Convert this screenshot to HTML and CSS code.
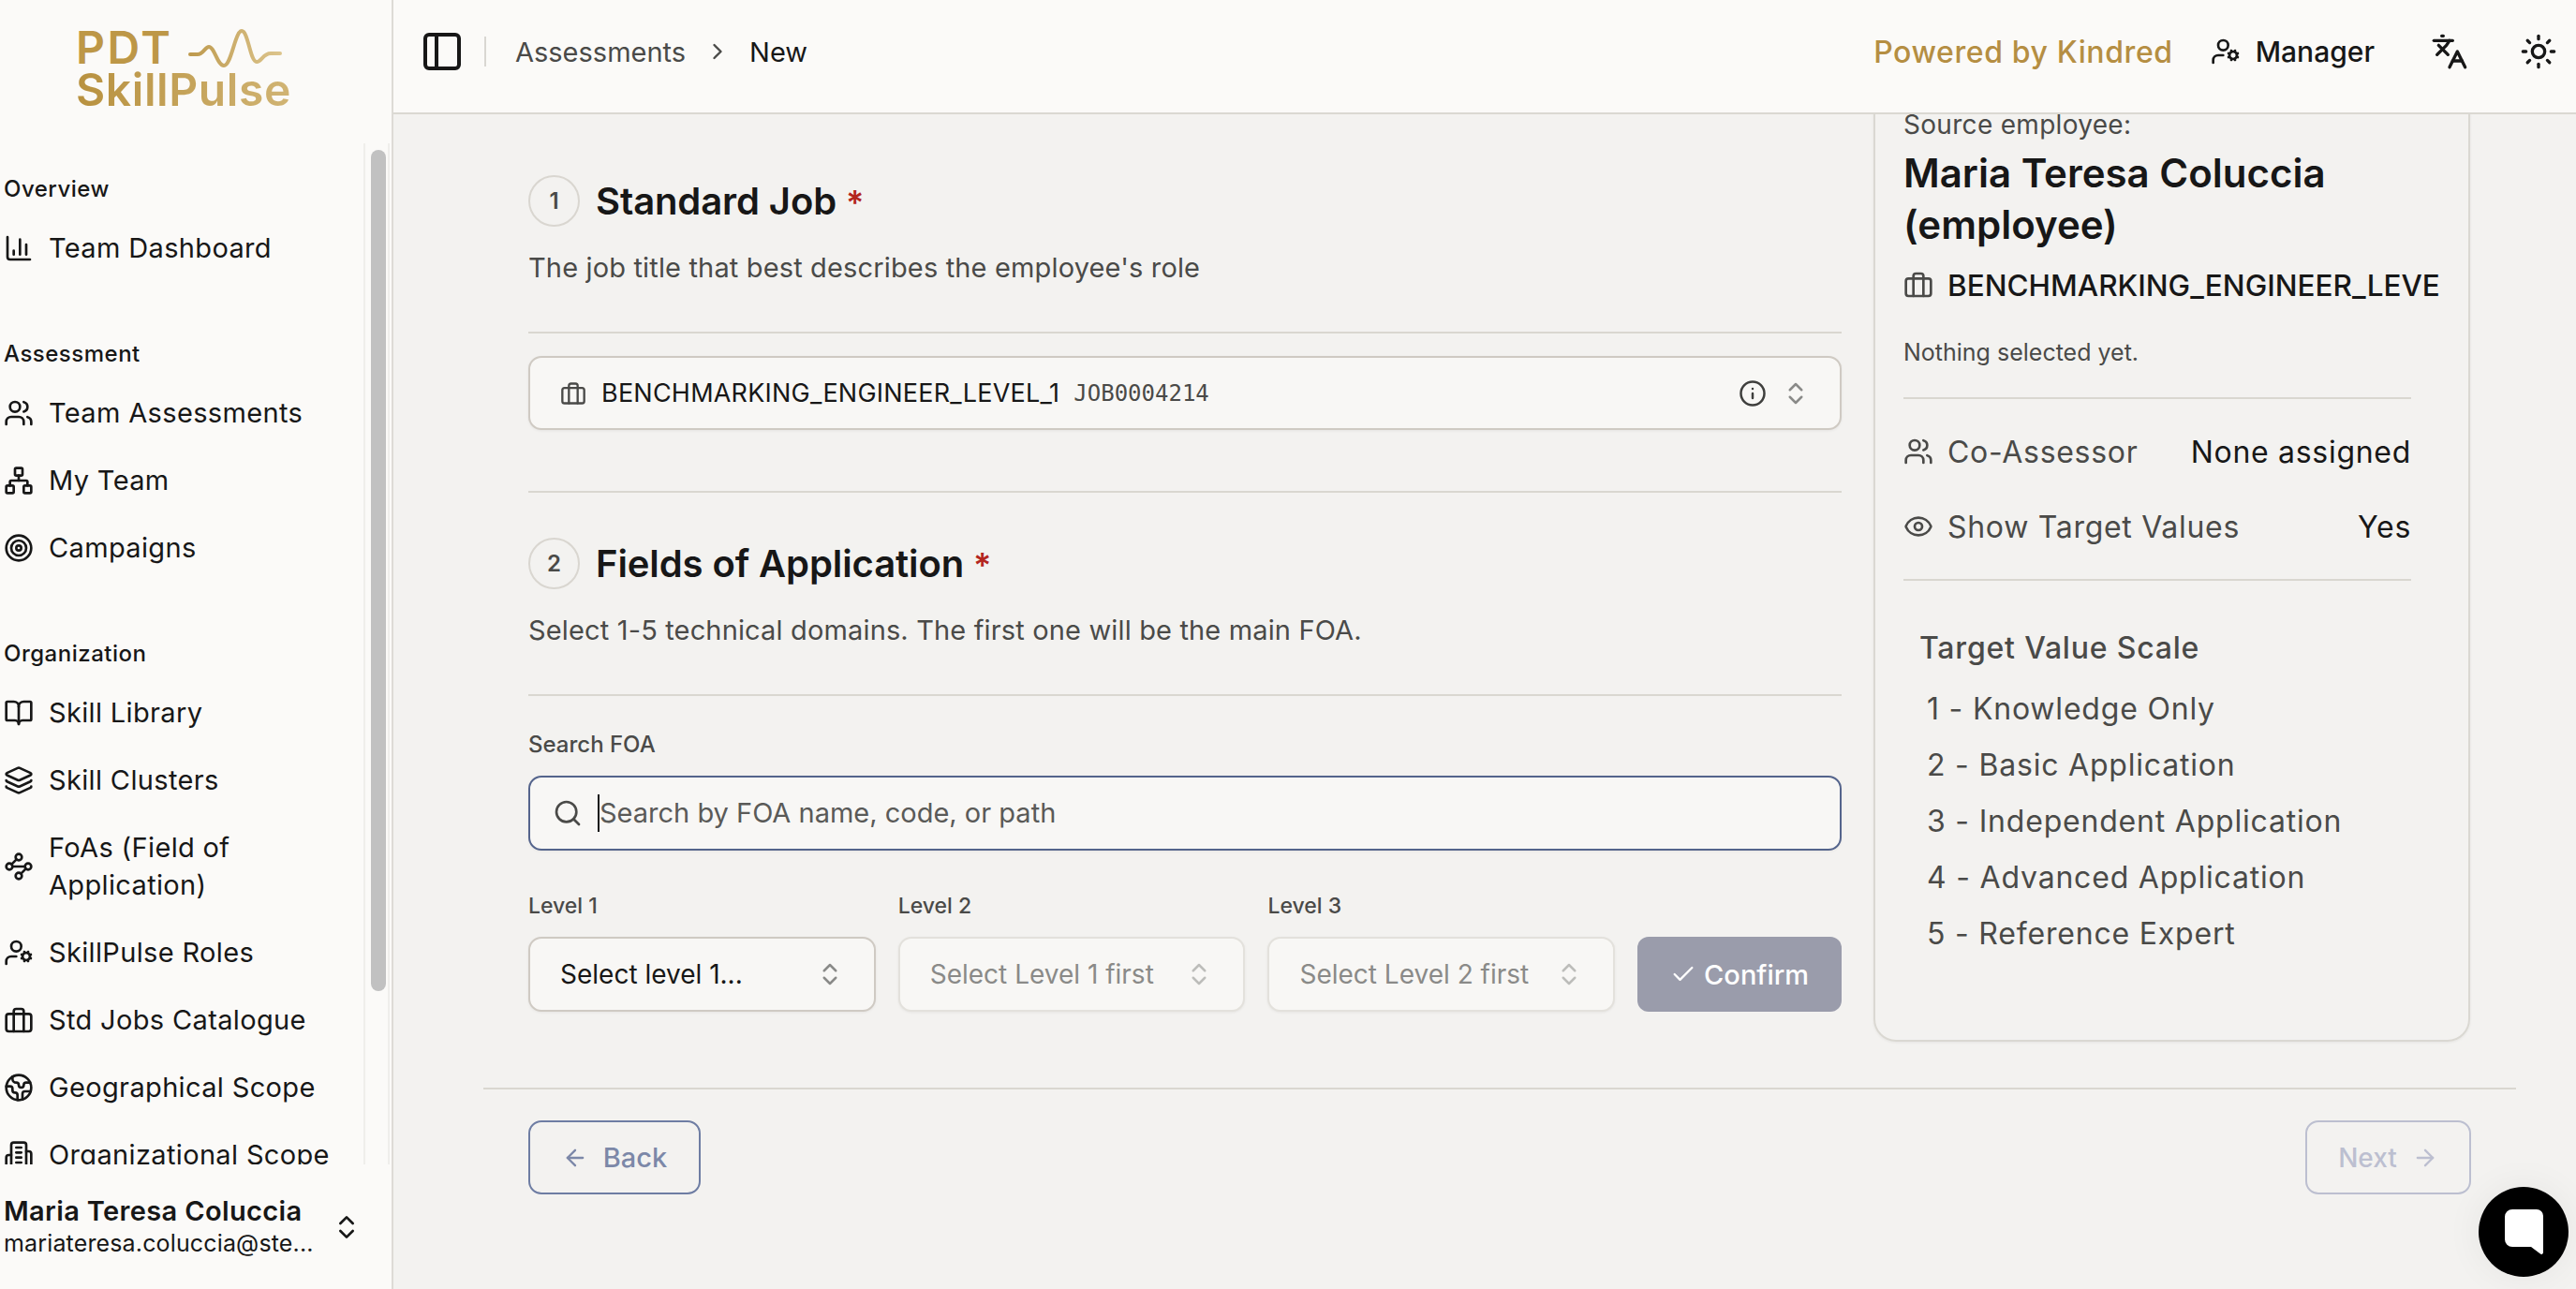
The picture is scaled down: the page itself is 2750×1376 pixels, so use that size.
FILE: index.html
```html
<!DOCTYPE html>
<html lang="en">
<head>
  <meta charset="UTF-8">
  <title>New Assessment - PDT SkillPulse</title>
  <link rel="stylesheet" href="styles.css">
</head>
<body>

  <!-- icon sprite -->
  <svg class="sprite" xmlns="http://www.w3.org/2000/svg">
    <symbol id="i-chart" viewBox="0 0 24 24"><path d="M3 3v16a2 2 0 0 0 2 2h16"/><path d="M18 17V9"/><path d="M13 17V5"/><path d="M8 17v-3"/></symbol>
    <symbol id="i-users" viewBox="0 0 24 24"><path d="M16 21v-2a4 4 0 0 0-4-4H6a4 4 0 0 0-4 4v2"/><circle cx="9" cy="7" r="4"/><path d="M22 21v-2a4 4 0 0 0-3-3.87"/><path d="M16 3.13a4 4 0 0 1 0 7.75"/></symbol>
    <symbol id="i-network" viewBox="0 0 24 24"><rect x="16" y="16" width="6" height="6" rx="1"/><rect x="2" y="16" width="6" height="6" rx="1"/><rect x="9" y="2" width="6" height="6" rx="1"/><path d="M5 16v-3a1 1 0 0 1 1-1h12a1 1 0 0 1 1 1v3"/><path d="M12 12V8"/></symbol>
    <symbol id="i-target" viewBox="0 0 24 24"><circle cx="12" cy="12" r="10"/><circle cx="12" cy="12" r="6"/><circle cx="12" cy="12" r="2"/></symbol>
    <symbol id="i-book" viewBox="0 0 24 24"><path d="M12 7v14"/><path d="M3 18a1 1 0 0 1-1-1V4a1 1 0 0 1 1-1h5a4 4 0 0 1 4 4 4 4 0 0 1 4-4h5a1 1 0 0 1 1 1v13a1 1 0 0 1-1 1h-6a3 3 0 0 0-3 3 3 3 0 0 0-3-3z"/></symbol>
    <symbol id="i-layers" viewBox="0 0 24 24"><path d="M12.83 2.18a2 2 0 0 0-1.66 0L2.6 6.08a1 1 0 0 0 0 1.83l8.58 3.91a2 2 0 0 0 1.66 0l8.58-3.9a1 1 0 0 0 0-1.83z"/><path d="M2 12a1 1 0 0 0 .58.91l8.6 3.91a2 2 0 0 0 1.65 0l8.58-3.9A1 1 0 0 0 22 12"/><path d="M2 17a1 1 0 0 0 .58.91l8.6 3.91a2 2 0 0 0 1.65 0l8.58-3.9A1 1 0 0 0 22 17"/></symbol>
    <symbol id="i-waypoints" viewBox="0 0 24 24"><circle cx="12" cy="4.5" r="2.5"/><path d="m10.2 6.3-3.9 3.9"/><circle cx="4.5" cy="12" r="2.5"/><path d="M7 12h10"/><circle cx="19.5" cy="12" r="2.5"/><path d="m13.8 17.7 3.9-3.9"/><circle cx="12" cy="19.5" r="2.5"/></symbol>
    <symbol id="i-usercog" viewBox="0 0 24 24"><path d="M10 15H6a4 4 0 0 0-4 4v2"/><path d="m14.305 16.53.923-.382"/><path d="m15.228 13.852-.923-.383"/><path d="m16.852 12.228-.383-.924"/><path d="m16.852 17.772-.383.924"/><path d="m19.148 12.228.383-.924"/><path d="m19.53 18.696-.382-.924"/><path d="m20.772 13.852.924-.383"/><path d="m20.772 16.148.924.383"/><circle cx="18" cy="15" r="3"/><circle cx="10" cy="7" r="4"/></symbol>
    <symbol id="i-briefcase" viewBox="0 0 24 24"><rect x="2" y="7" width="20" height="14" rx="2"/><path d="M16 21V5a2 2 0 0 0-2-2h-4a2 2 0 0 0-2 2v16"/></symbol>
    <symbol id="i-earth" viewBox="0 0 24 24"><path d="M21.54 15H17a2 2 0 0 0-2 2v4.54"/><path d="M7 3.34V5a3 3 0 0 0 3 3a2 2 0 0 1 2 2c0 1.1.9 2 2 2a2 2 0 0 0 2-2c0-1.1.9-2 2-2h3.17"/><path d="M11 21.95V18a2 2 0 0 0-2-2a2 2 0 0 1-2-2v-1a2 2 0 0 0-2-2H2.05"/><circle cx="12" cy="12" r="10"/></symbol>
    <symbol id="i-building" viewBox="0 0 24 24"><path d="M6 22V4a2 2 0 0 1 2-2h8a2 2 0 0 1 2 2v18Z"/><path d="M6 12H4a2 2 0 0 0-2 2v6a2 2 0 0 0 2 2h2"/><path d="M18 9h2a2 2 0 0 1 2 2v9a2 2 0 0 1-2 2h-2"/><path d="M10 6h4"/><path d="M10 10h4"/><path d="M10 14h4"/><path d="M10 18h4"/></symbol>
    <symbol id="i-updown" viewBox="0 0 24 24"><path d="m7 15 5 5 5-5"/><path d="m7 9 5-5 5 5"/></symbol>
    <symbol id="i-panel" viewBox="0 0 24 24"><rect x="3" y="3" width="18" height="18" rx="2"/><path d="M9 3v18"/></symbol>
    <symbol id="i-right" viewBox="0 0 24 24"><path d="m9 18 6-6-6-6"/></symbol>
    <symbol id="i-info" viewBox="0 0 24 24"><circle cx="12" cy="12" r="10"/><path d="M12 16v-4"/><path d="M12 8h.01"/></symbol>
    <symbol id="i-eye" viewBox="0 0 24 24"><path d="M2.062 12.348a1 1 0 0 1 0-.696 10.75 10.75 0 0 1 19.876 0 1 1 0 0 1 0 .696 10.75 10.75 0 0 1-19.876 0"/><circle cx="12" cy="12" r="3"/></symbol>
    <symbol id="i-search" viewBox="0 0 24 24"><path d="m21 21-4.34-4.34"/><circle cx="11" cy="11" r="8"/></symbol>
    <symbol id="i-check" viewBox="0 0 24 24"><path d="M20 6 9 17l-5-5"/></symbol>
    <symbol id="i-arrow-left" viewBox="0 0 24 24"><path d="m12 19-7-7 7-7"/><path d="M19 12H5"/></symbol>
    <symbol id="i-arrow-right" viewBox="0 0 24 24"><path d="M5 12h14"/><path d="m12 5 7 7-7 7"/></symbol>
    <symbol id="i-lang" viewBox="0 0 24 24"><path d="m5 8 6 6"/><path d="m4 14 6-6 2-3"/><path d="M2 5h12"/><path d="M7 2h1"/><path d="m22 22-5-10-5 10"/><path d="M14 18h6"/></symbol>
    <symbol id="i-sun" viewBox="0 0 24 24"><circle cx="12" cy="12" r="4"/><path d="M12 2v2"/><path d="M12 20v2"/><path d="m4.93 4.93 1.41 1.41"/><path d="m17.66 17.66 1.41 1.41"/><path d="M2 12h2"/><path d="M20 12h2"/><path d="m6.34 17.66-1.41 1.41"/><path d="m19.07 4.93-1.41 1.41"/></symbol>
    <linearGradient id="gold" x1="0" y1="0" x2="1" y2="0"><stop offset="0" stop-color="#BE9A4E"/><stop offset="1" stop-color="#DCC48C"/></linearGradient>
  </svg>

  <div class="app">
    <aside class="sidebar">
      <div class="logo">
        <div class="logo-top">
          <span class="logo-pdt">PDT</span>
          <svg class="pulse" viewBox="0 0 100 41" fill="none"><path d="M2 27H10C16 27 18 19 22 19C28 19 31 39 38 39C46 39 50 2 57 2C64 2 66 35 73 35C78 35 80 26 88 26H98" stroke="url(#gold)" stroke-width="4" stroke-linecap="round"/></svg>
        </div>
        <div class="logo-name">SkillPulse</div>
      </div>

      <div class="nav-wrap">
        <nav class="nav">
          <div class="nav-label">Overview</div>
          <a class="nav-item"><svg class="ic"><use href="#i-chart"/></svg><span>Team Dashboard</span></a>

          <div class="nav-label">Assessment</div>
          <a class="nav-item"><svg class="ic"><use href="#i-users"/></svg><span>Team Assessments</span></a>
          <a class="nav-item"><svg class="ic"><use href="#i-network"/></svg><span>My Team</span></a>
          <a class="nav-item"><svg class="ic"><use href="#i-target"/></svg><span>Campaigns</span></a>

          <div class="nav-label">Organization</div>
          <a class="nav-item"><svg class="ic"><use href="#i-book"/></svg><span>Skill Library</span></a>
          <a class="nav-item"><svg class="ic"><use href="#i-layers"/></svg><span>Skill Clusters</span></a>
          <a class="nav-item tall"><svg class="ic"><use href="#i-waypoints"/></svg><span>FoAs (Field of Application)</span></a>
          <a class="nav-item"><svg class="ic"><use href="#i-usercog"/></svg><span>SkillPulse Roles</span></a>
          <a class="nav-item"><svg class="ic"><use href="#i-briefcase"/></svg><span>Std Jobs Catalogue</span></a>
          <a class="nav-item"><svg class="ic"><use href="#i-earth"/></svg><span>Geographical Scope</span></a>
          <a class="nav-item"><svg class="ic"><use href="#i-building"/></svg><span>Organizational Scope</span></a>
        </nav>
        <div class="scroll-track"><div class="scroll-thumb"></div></div>
      </div>

      <div class="user">
        <div class="user-text">
          <div class="user-name">Maria Teresa Coluccia</div>
          <div class="user-mail">mariateresa.coluccia@ste...</div>
        </div>
        <svg class="ic user-chev"><use href="#i-updown"/></svg>
      </div>
    </aside>

    <div class="right">
      <header class="topbar">
        <svg class="ic panel-btn"><use href="#i-panel"/></svg>
        <div class="top-sep"></div>
        <div class="crumbs">
          <span class="crumb-link">Assessments</span>
          <svg class="ic crumb-arrow"><use href="#i-right"/></svg>
          <span>New</span>
        </div>
        <div class="top-actions">
          <span class="powered">Powered by Kindred</span>
          <span class="role"><svg class="ic"><use href="#i-usercog"/></svg>Manager</span>
          <svg class="ic top-ic lang"><use href="#i-lang"/></svg>
          <svg class="ic top-ic"><use href="#i-sun"/></svg>
        </div>
      </header>

      <main class="main">
        <div class="columns">
          <section class="form">
            <div class="step-head">
              <span class="step-num">1</span>
              <h2>Standard Job <span class="req">*</span></h2>
            </div>
            <p class="step-desc">The job title that best describes the employee's role</p>
            <hr class="line first">
            <div class="job-box">
              <svg class="ic job-ic"><use href="#i-briefcase"/></svg>
              <span class="job-name">BENCHMARKING_ENGINEER_LEVEL_1</span>
              <span class="job-code">JOB0004214</span>
              <svg class="ic info"><use href="#i-info"/></svg>
              <svg class="ic updown"><use href="#i-updown"/></svg>
            </div>
            <hr class="line second">

            <div class="step-head">
              <span class="step-num">2</span>
              <h2>Fields of Application <span class="req">*</span></h2>
            </div>
            <p class="step-desc">Select 1-5 technical domains. The first one will be the main FOA.</p>
            <hr class="line first">

            <label class="field-label search-label">Search FOA</label>
            <div class="search-box">
              <svg class="ic"><use href="#i-search"/></svg>
              <span class="placeholder">Search by FOA name, code, or path</span>
            </div>

            <div class="levels">
              <div class="level">
                <label class="field-label">Level 1</label>
                <div class="select"><span>Select level 1...</span><svg class="ic updown"><use href="#i-updown"/></svg></div>
              </div>
              <div class="level">
                <label class="field-label">Level 2</label>
                <div class="select off"><span>Select Level 1 first</span><svg class="ic updown"><use href="#i-updown"/></svg></div>
              </div>
              <div class="level">
                <label class="field-label">Level 3</label>
                <div class="select off"><span>Select Level 2 first</span><svg class="ic updown"><use href="#i-updown"/></svg></div>
              </div>
              <button class="confirm"><svg class="ic"><use href="#i-check"/></svg>Confirm</button>
            </div>
          </section>

          <aside class="summary">
            <div class="src-label">Source employee:</div>
            <div class="src-name">Maria Teresa Coluccia (employee)</div>
            <div class="src-job"><svg class="ic"><use href="#i-briefcase"/></svg><span>BENCHMARKING_ENGINEER_LEVE</span></div>
            <div class="src-none">Nothing selected yet.</div>
            <hr class="line">
            <div class="meta">
              <svg class="ic"><use href="#i-users"/></svg>
              <span class="meta-key">Co-Assessor</span>
              <span class="meta-val">None assigned</span>
            </div>
            <div class="meta">
              <svg class="ic"><use href="#i-eye"/></svg>
              <span class="meta-key">Show Target Values</span>
              <span class="meta-val">Yes</span>
            </div>
            <hr class="line">
            <div class="scale">
              <h3>Target Value Scale</h3>
              <div>1 - Knowledge Only</div>
              <div>2 - Basic Application</div>
              <div>3 - Independent Application</div>
              <div>4 - Advanced Application</div>
              <div>5 - Reference Expert</div>
            </div>
          </aside>
        </div>

        <footer class="wizard-foot">
          <button class="btn-outline"><svg class="ic"><use href="#i-arrow-left"/></svg>Back</button>
          <button class="btn-outline next">Next<svg class="ic"><use href="#i-arrow-right"/></svg></button>
        </footer>
      </main>
    </div>
  </div>

  <div class="chat">
    <svg viewBox="0 0 41 48"><path d="M8 0H34a7 7 0 0 1 7 7V46a2 2 0 0 1-3 1.6L28 40H8a8 8 0 0 1-8-8V8a8 8 0 0 1 8-8Z" fill="#fff"/></svg>
  </div>

</body>
</html>
```

FILE: styles.css
```css
* { box-sizing: border-box; }
html, body { margin: 0; height: 100%; overflow: hidden; }
body { font-family: Inter, "Noto Sans", sans-serif; color: #171717; background: #F3F2F0; font-size: 28px; }
.sprite { position: absolute; width: 0; height: 0; }
.ic { width: 32px; height: 32px; fill: none; stroke: currentColor; stroke-width: 2; stroke-linecap: round; stroke-linejoin: round; flex-shrink: 0; }
.app { display: flex; height: 1376px; }
h2, h3, p { margin: 0; }

/* sidebar */
.sidebar { width: 420px; flex-shrink: 0; display: flex; flex-direction: column; background: #FBFAF8; border-right: 2px solid #DDDBD6; }
.logo { height: 153px; padding: 27px 0 0 81px; font-weight: 600; line-height: 42px; }
.logo-top { display: flex; align-items: center; gap: 17px; height: 48px; }
.logo-pdt { font-size: 48px; letter-spacing: 2.5px; color: #BD9747; }
.pulse { width: 100px; height: 41px; }
.logo-name { font-size: 48px; letter-spacing: 0.6px; background: linear-gradient(90deg, #B8913F, #DCC48C); -webkit-background-clip: text; background-clip: text; color: transparent; }

.nav-wrap { flex: 1; min-height: 0; display: flex; }
.nav { width: 388px; flex-shrink: 0; padding: 24px 0 0 4px; overflow: hidden; }
.nav-label { height: 48px; display: flex; align-items: center; font-size: 24px; font-weight: 500; margin: 60px 0 12px; letter-spacing: 0.5px; }
.nav-label:first-child { margin-top: 0; }
.nav-item { display: flex; align-items: center; gap: 16px; height: 56px; margin-bottom: 16px; font-size: 29px; line-height: 40px; letter-spacing: 0.35px; }
.nav-item:has(+ .nav-label) { margin-bottom: 0; }
.nav-item.tall { height: 96px; }
.scroll-track { width: 28px; padding: 7px 4px 0 8px; border-left: 2px solid #EFEEEB; border-right: 2px solid #EFEEEB; }
.scroll-thumb { width: 16px; height: 898px; background: #C1C1C1; border-radius: 8px; margin-left: -2px; }

.user { height: 133px; display: flex; align-items: center; padding: 0 0 0 4px; }
.user-text { width: 330px; line-height: 34px; }
.user-name { font-size: 29px; font-weight: 600; letter-spacing: 0.35px; white-space: nowrap; }
.user-mail { font-size: 25px; white-space: nowrap; letter-spacing: 0.15px; }
.user-chev { margin-left: 20px; }

/* top bar */
.right { flex: 1; min-width: 0; display: flex; flex-direction: column; }
.topbar { height: 122px; flex-shrink: 0; display: flex; align-items: center; padding: 0 20px 10px 28px; background: #FBFAF8; border-bottom: 2px solid #DAD8D2; position: relative; z-index: 2; }
.panel-btn { width: 48px; height: 48px; }
.top-sep { width: 2px; height: 32px; background: #D9D7D2; margin: 0 31px 0 21px; }
.crumbs { display: flex; align-items: center; gap: 20px; font-size: 29px; }
.crumb-link { color: #4A4A48; }
.crumb-arrow { width: 28px; height: 28px; color: #4A4A48; }
.top-actions { margin-left: auto; display: flex; align-items: center; }
.powered { color: #B58E42; font-weight: 500; font-size: 32px; letter-spacing: 0.6px; }
.role { display: flex; align-items: center; gap: 16px; font-weight: 500; font-size: 30px; margin-left: 40px; }
.top-ic { width: 40px; height: 40px; margin-left: 55px; }
.top-ic.lang { margin-left: 60px; }

/* main */
.main { flex: 1; min-height: 0; padding: 0 64px 0 96px; overflow: hidden; }
.columns { display: flex; gap: 34px; padding: 0 48px; height: 1041px; border-bottom: 2px solid #D9D7D0; }
.form { width: 1402px; flex-shrink: 0; padding-top: 64px; }
.step-head { display: flex; align-items: center; gap: 17px; height: 56px; }
.step-num { width: 55px; height: 55px; border: 2px solid #D9D6D0; border-radius: 50%; display: flex; align-items: center; justify-content: center; font-size: 24px; font-weight: 600; color: #4A4A48; }
h2 { font-size: 40px; font-weight: 600; letter-spacing: -0.1px; }
.req { color: #B3261E; font-size: 36px; }
.step-desc { margin-top: 24px; font-size: 29px; letter-spacing: 0.15px; line-height: 40px; color: #4A4A48; }
.line { border: 0; height: 2px; background: #D9D7D0; margin: 0; }
.line.first { margin-top: 48px; }
.line.second { margin-top: 65px; margin-bottom: 47px; }

.job-box { margin-top: 24px; height: 79px; display: flex; align-items: center; padding: 0 32px 0 32px; background: #F8F7F5; border: 2px solid #CFCAC3; border-radius: 14px; box-shadow: 0 1px 3px rgba(0,0,0,0.06); }
.job-ic { width: 28px; height: 28px; color: #4A4A48; margin-right: 16px; }
.job-name { font-size: 27px; letter-spacing: 0.22px; }
.job-code { font-family: "DejaVu Sans Mono", monospace; font-size: 24px; color: #4A4A48; margin-left: 15px; }
.info { width: 30px; height: 30px; color: #3F3F3D; margin-left: auto; }
.updown { width: 30px; height: 30px; color: #8A8A88; margin-left: 16px; }

.field-label { display: block; font-size: 24px; font-weight: 500; color: #4A4A48; line-height: 34px; }
.search-label { margin-top: 35px; }
.search-box { margin-top: 16px; height: 80px; display: flex; align-items: center; gap: 16px; padding: 0 24px; background: #F8F7F5; border: 2px solid #54648C; border-radius: 14px; box-shadow: 0 1px 3px rgba(0,0,0,0.06); }
.search-box .ic { color: #4A4A48; }
.placeholder { border-left: 2px solid #171717; font-size: 29px; line-height: 40px; color: #5A5A58; }

.levels { margin-top: 42px; display: flex; align-items: flex-end; gap: 24px; }
.level { width: 371px; }
.level .field-label { margin-bottom: 16px; font-size: 23px; }
.select { height: 80px; display: flex; align-items: center; justify-content: space-between; padding: 0 32px; background: #F8F7F5; border: 2px solid #CFCAC3; border-radius: 14px; font-size: 28px; box-shadow: 0 1px 3px rgba(0,0,0,0.06); }
.select.off { border-color: #E3E1DC; color: #8A8A88; }
.select.off .updown { color: #BDBDBA; }
.select .updown { margin-left: 0; }
.confirm { width: 218px; height: 80px; display: flex; align-items: center; justify-content: center; gap: 8px; border: 0; border-radius: 12px; background: #9A9CAB; color: #fff; font: 500 29px Inter, sans-serif; }
.confirm .ic { width: 28px; height: 28px; }

.summary { width: 637px; flex-shrink: 0; height: 1030px; margin-top: -40px; padding: 31px 30px 0 30px; border: 2px solid #DAD8D2; border-radius: 0 0 24px 24px; box-shadow: 0 1px 3px rgba(0,0,0,0.06); overflow: hidden; align-self: flex-start; }
.src-label { font-size: 28px; letter-spacing: 0.3px; line-height: 36px; color: #4A4A48; }
.src-name { font-size: 42px; font-weight: 600; line-height: 55px; margin-top: 6px; width: 520px; }
.src-job { display: flex; align-items: center; gap: 15px; margin-top: 13px; height: 48px; font-size: 31.5px; font-weight: 500; white-space: nowrap; }
.src-job .ic { color: #4A4A48; }
.src-none { margin-top: 30px; font-size: 25px; line-height: 36px; color: #4A4A48; }
.summary .line { width: 542px; margin-top: 30px; }
.meta { display: flex; align-items: center; gap: 15px; width: 542px; height: 48px; font-size: 32px; letter-spacing: 0.7px; margin-top: 32px; }
.meta .ic { color: #4A4A48; }
.meta-key { color: #4A4A48; }
.meta-val { margin-left: auto; }
.summary .meta + .line { margin-top: 32px; }
.scale { padding: 50px 0 0 17px; font-size: 32px; letter-spacing: 0.8px; color: #4A4A48; line-height: 60px; }
.scale h3 { font-size: 32px; font-weight: 500; line-height: 44px; margin-bottom: 13px; }
.scale div { padding-left: 8px; }

.wizard-foot { display: flex; justify-content: space-between; padding: 33px 48px 0; }
.btn-outline { width: 184px; height: 79px; display: flex; align-items: center; justify-content: center; gap: 16px; background: none; border: 2px solid #6E7DA3; border-radius: 14px; color: #7C88A8; font: 500 29px Inter, sans-serif; }
.btn-outline .ic { width: 28px; height: 28px; }
.btn-outline.next { width: 177px; border-color: #BCBFD0; color: #BCBFD0; font-size: 28px; }

.chat { position: fixed; right: 8px; bottom: 13px; width: 96px; height: 96px; border-radius: 50%; background: #000; display: flex; align-items: center; justify-content: center; box-shadow: 0 0 40px rgba(0,0,0,0.06); }
.chat svg { width: 41px; height: 48px; }
```
